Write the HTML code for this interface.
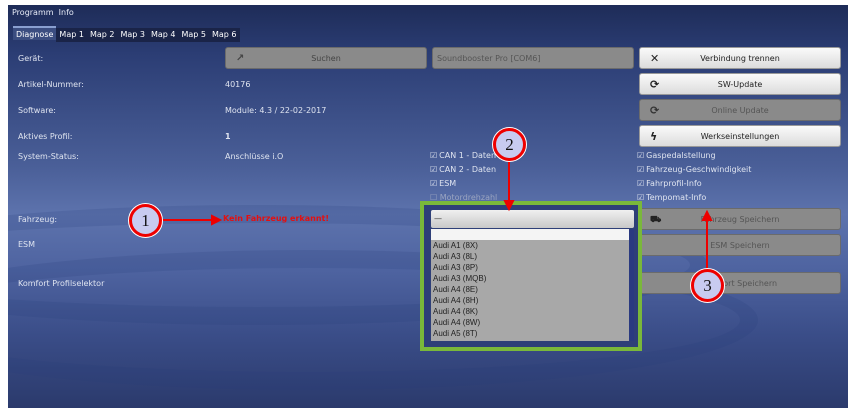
<!DOCTYPE html>
<html><head><style>
*{margin:0;padding:0;box-sizing:border-box}
body{width:854px;height:413px;background:#fff;font-family:"DejaVu Sans","Liberation Sans",sans-serif;font-size:8px;color:#dfe4f0;position:relative;overflow:hidden}
#app{position:absolute;left:8px;top:5px;width:840px;height:403px;overflow:hidden;
background:linear-gradient(180deg,#1e2c58 0%,#2b3d74 12%,#4a5f98 40%,#5d73ad 52%,#4e63a0 66%,#3a4d88 82%,#2b3a6c 100%)}
.a{position:absolute;white-space:nowrap}
.wave{position:absolute;border-radius:50%;border:18px solid rgba(40,60,120,.18)}
.btn{position:absolute;height:22px;border-radius:3px;text-align:center;line-height:22px;font-size:8px}
.w{background:linear-gradient(#fafafa,#dcdcdc);color:#222;border:1px solid #999}
.g{background:#8a8a8a;color:#555;border:1px solid #6b6b6b}
.ic{position:absolute;left:10px;top:0;font-weight:bold;font-size:11px}
.cb{position:absolute;font-size:8px;color:#dfe4f0}
.cb:before{content:"\2611";margin-right:2px}
.tab{display:inline-block;padding:0 3px;background:#1a2448;color:#fff;height:14px;line-height:14px}
.circ{position:absolute;width:33px;height:33px;border-radius:50%;background:#c8cbf0;border:3px solid #e00;box-shadow:0 0 0 1px #fff;font-family:"Liberation Serif",serif;font-size:17px;color:#111;text-align:center;line-height:27px}
.li{height:11px;line-height:11px;padding-left:2px;color:#222;font-size:8px;font-family:"Liberation Sans",sans-serif}
</style></head><body>
<div id="app">
<div class="wave" style="left:-200px;top:200px;width:900px;height:120px"></div>
<div class="wave" style="left:-150px;top:245px;width:900px;height:140px"></div>
<div class="a" style="left:4px;top:3px;color:#e8ecf8">Programm&nbsp;&nbsp;Info</div>
<div class="a" style="left:5px;top:21px"><span class="tab" style="background:#3b4d80;border-top:2px solid #8aa0d0">Diagnose</span><span class="tab">Map 1</span><span class="tab">Map 2</span><span class="tab">Map 3</span><span class="tab">Map 4</span><span class="tab">Map 5</span><span class="tab">Map 6</span></div>
<div class="a" style="left:10px;top:49px">Gerät:</div>
<div class="a" style="left:10px;top:75px">Artikel-Nummer:</div>
<div class="a" style="left:10px;top:101px">Software:</div>
<div class="a" style="left:10px;top:127px">Aktives Profil:</div>
<div class="a" style="left:10px;top:147px">System-Status:</div>
<div class="a" style="left:10px;top:210px">Fahrzeug:</div>
<div class="a" style="left:10px;top:235px">ESM</div>
<div class="a" style="left:10px;top:274px">Komfort Profilselektor</div>
<div class="a" style="left:217px;top:75px">40176</div>
<div class="a" style="left:217px;top:101px">Module: 4.3 / 22-02-2017</div>
<div class="a" style="left:217px;top:127px;font-weight:bold">1</div>
<div class="a" style="left:217px;top:147px">Anschlüsse i.O</div>
<div class="btn g" style="left:217px;top:42px;width:202px;color:#444"><span class="ic" style="font-size:10px">&#x2197;</span>Suchen</div>
<div class="btn g" style="left:424px;top:42px;width:202px;text-align:left;padding-left:4px;color:#555">Soundbooster Pro [COM6]</div>
<div class="btn w" style="left:631px;top:42px;width:202px"><span class="ic">✕</span>Verbindung trennen</div>
<div class="btn w" style="left:631px;top:68px;width:202px"><span class="ic">⟳</span>SW-Update</div>
<div class="btn g" style="left:631px;top:94px;width:202px;color:#555"><span class="ic" style="color:#333">⟳</span>Online Update</div>
<div class="btn w" style="left:631px;top:120px;width:202px"><span class="ic">ϟ</span>Werkseinstellungen</div>
<div class="cb" style="left:422px;top:146px">CAN 1 - Daten</div>
<div class="cb" style="left:422px;top:160px">CAN 2 - Daten</div>
<div class="cb" style="left:422px;top:174px">ESM</div>
<div class="a" style="left:422px;top:188px;color:#9aa4c0">☐ Motordrehzahl</div>
<div class="cb" style="left:629px;top:146px">Gaspedalstellung</div>
<div class="cb" style="left:629px;top:160px">Fahrzeug-Geschwindigkeit</div>
<div class="cb" style="left:629px;top:174px">Fahrprofil-Info</div>
<div class="cb" style="left:629px;top:188px">Tempomat-Info</div>
<div class="btn g" style="left:631px;top:203px;width:202px"><span class="ic" style="color:#222;font-size:9px">⛟</span>Fahrzeug Speichern</div>
<div class="btn g" style="left:631px;top:229px;width:202px">ESM Speichern</div>
<div class="btn g" style="left:631px;top:267px;width:202px">Komfort Speichern</div>
<div class="a" style="left:412px;top:196px;width:222px;height:150px;border:4px solid #7ab83a;background:#2e3f78"></div>
<div class="a" style="left:423px;top:205px;width:203px;height:18px;background:linear-gradient(#f0f0f0,#c8c8c8);color:#333;padding-left:3px;line-height:18px;border-radius:2px">—</div>
<div class="a" style="left:423px;top:224px;width:203px;height:112px;background:#a8a8a8;border-right:5px solid #2a3a80">
<div class="li" style="background:#f4f4f4;height:11px"></div>
<div class="li">Audi A1 (8X)</div><div class="li">Audi A3 (8L)</div><div class="li">Audi A3 (8P)</div><div class="li">Audi A3 (MQB)</div><div class="li">Audi A4 (8E)</div><div class="li">Audi A4 (8H)</div><div class="li">Audi A4 (8K)</div><div class="li">Audi A4 (8W)</div><div class="li">Audi A5 (8T)</div></div>
<div class="a" style="left:215px;top:209px;color:#e41010;font-weight:bold;font-size:8px">Kein Fahrzeug erkannt!</div>
<svg class="a" style="left:0;top:0" width="840" height="403">
<g stroke="#e00" stroke-width="2" fill="#e00">
<line x1="152" y1="215" x2="208" y2="215"/><polygon points="212,215 204,211 204,219"/>
<line x1="501" y1="152" x2="501" y2="200"/><polygon points="501,204 497,196 505,196"/>
<line x1="699" y1="270" x2="699" y2="212"/><polygon points="699,207 695,215 703,215"/>
</g></svg>
<div class="circ" style="left:121px;top:199px">1</div>
<div class="circ" style="left:485px;top:123px">2</div>
<div class="circ" style="left:683px;top:264px">3</div>
</div>
</body></html>
